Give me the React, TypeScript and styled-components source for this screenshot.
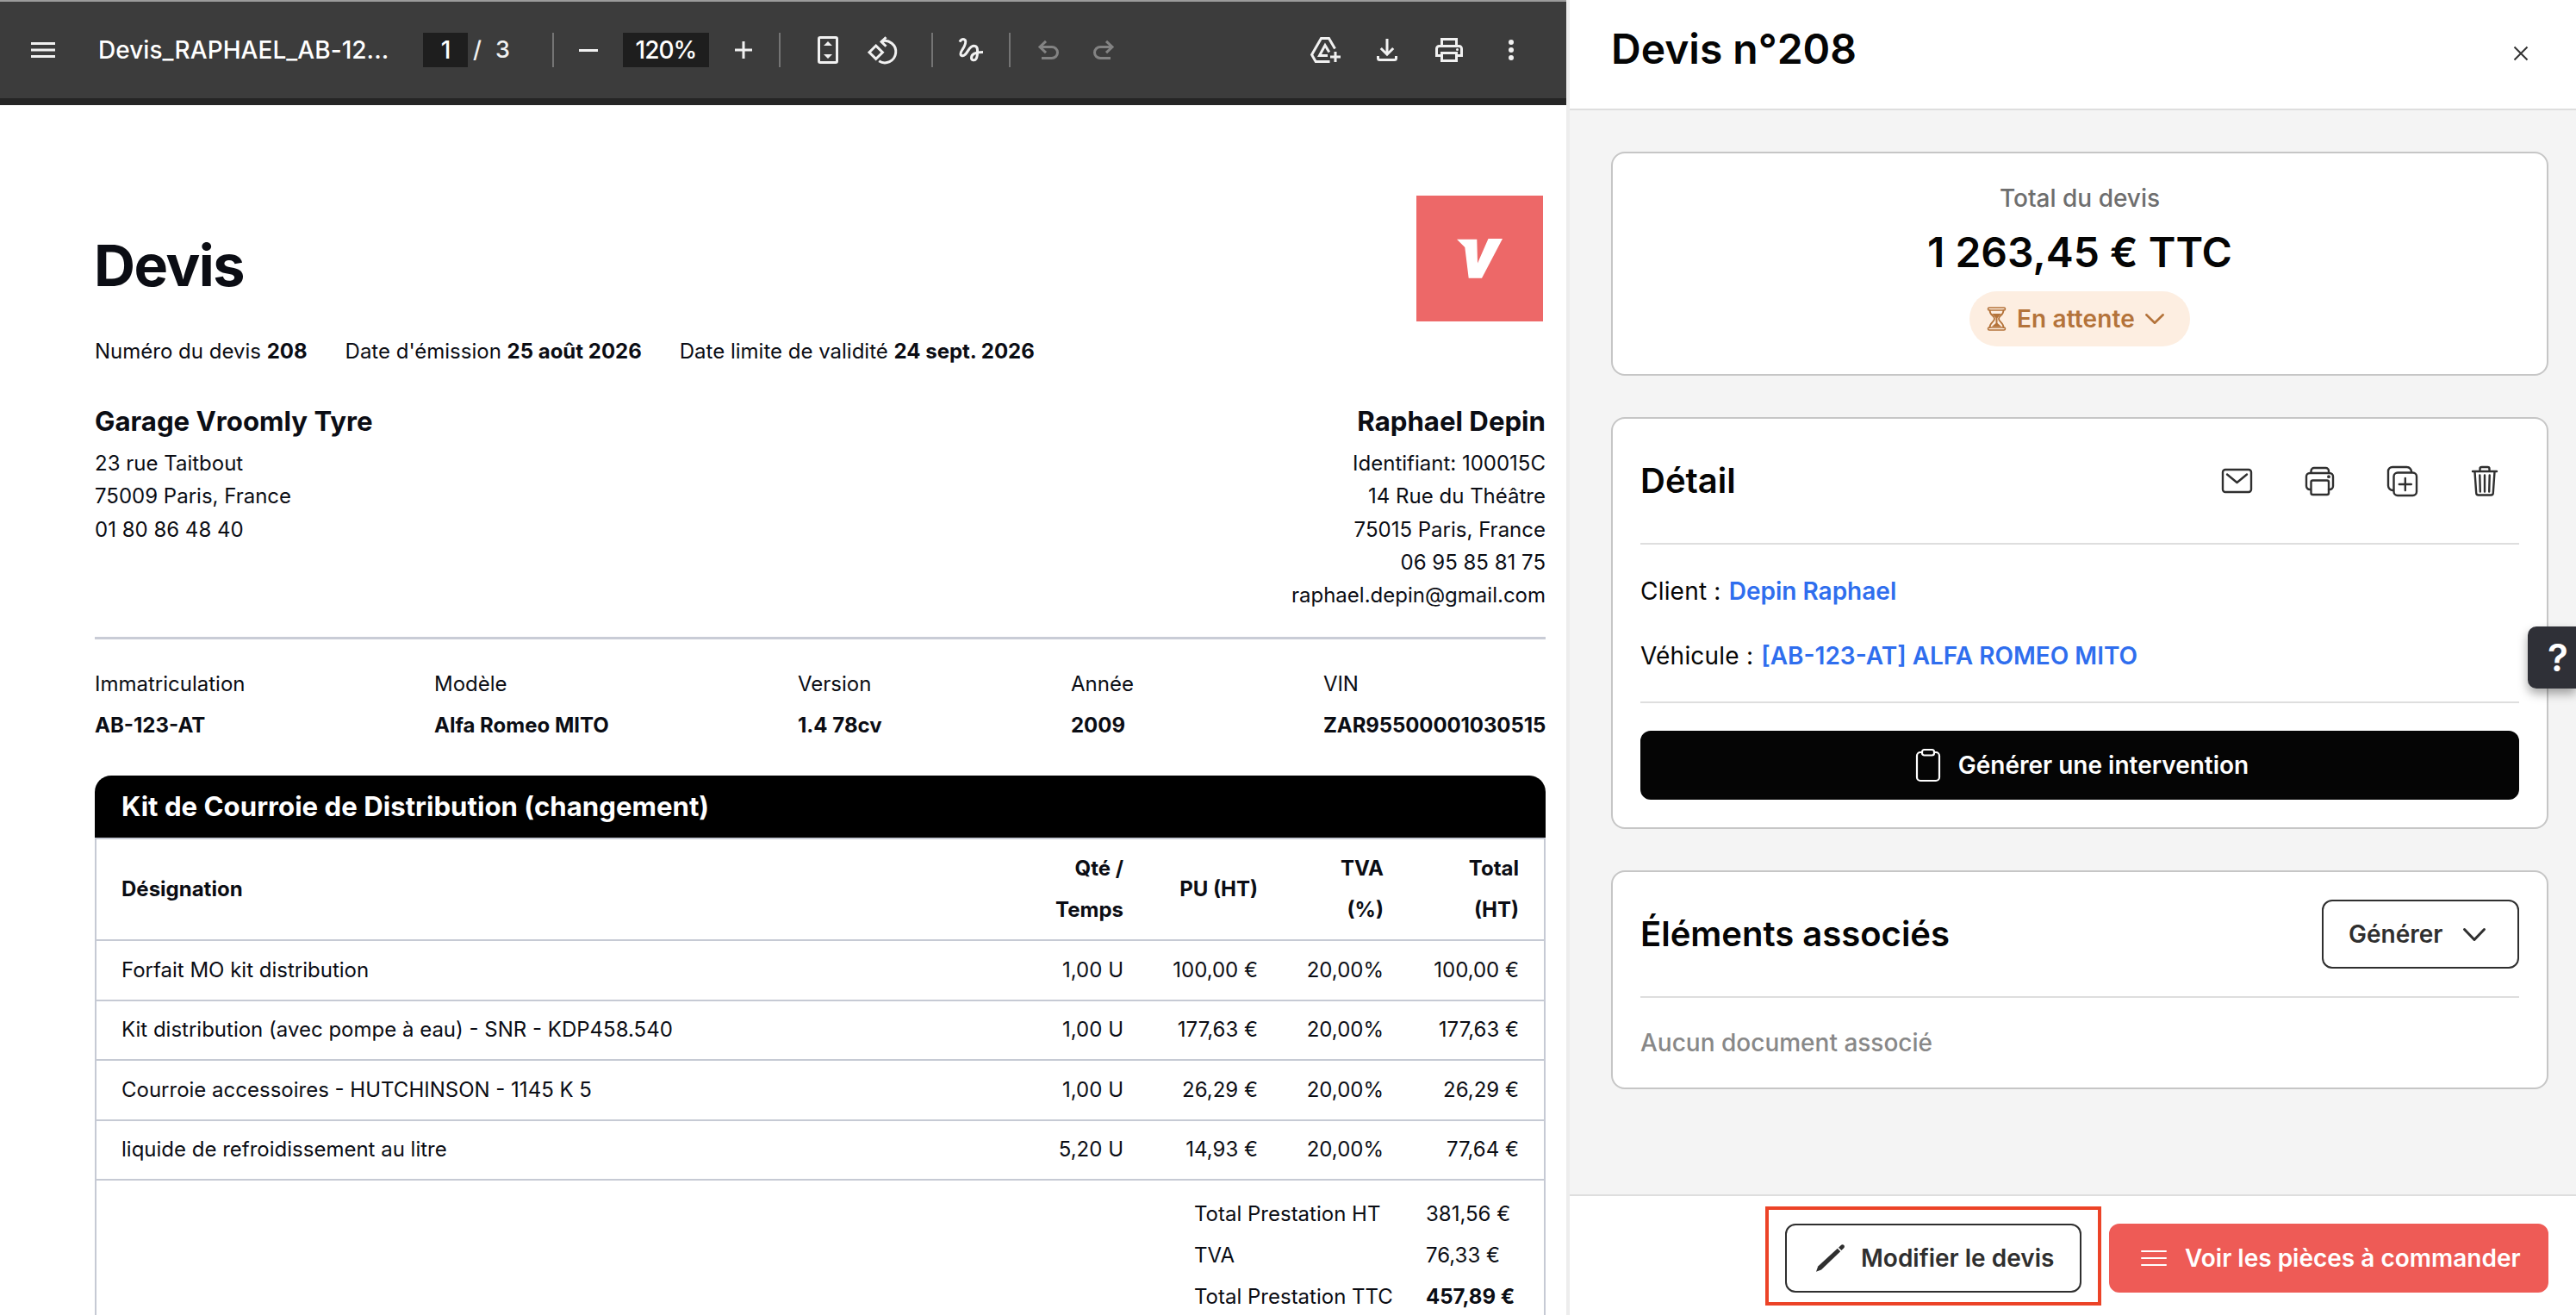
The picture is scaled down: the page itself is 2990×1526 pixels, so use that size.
import React from "react";
import styled, { createGlobalStyle } from "styled-components";

const GlobalStyle = createGlobalStyle`
  * { box-sizing: border-box; }
  body { margin: 0; background: #fff; font-family: Inter, "Liberation Sans", sans-serif; }
  h1, h2, p { margin: 0; }
  svg { display: block; flex: none; overflow: visible; }
`;

const Screen = styled.div`
  position: relative;
  display: flex;
  width: 2990px;
  height: 1526px;
  overflow: hidden;
`;

/* ---------- PDF viewer ---------- */

const Viewer = styled.main`
  width: 1818px;
  height: 1526px;
  overflow: hidden;
  background: #fff;
`;

const Toolbar = styled.header`
  display: flex;
  align-items: center;
  height: 122px;
  padding-left: 36px;
  border-top: 2px solid #9b9b9b;
  border-bottom: 8px solid #252525;
  background: #3c3c3c;
  color: #f1f1f1;
`;

const Slot = styled.div<{ $gap: number; $width: number; $dim?: boolean }>`
  display: flex;
  flex: none;
  justify-content: center;
  width: ${(p) => p.$width}px;
  margin-left: ${(p) => p.$gap}px;
  color: ${(p) => (p.$dim ? "#838383" : "inherit")};
`;

const FileName = styled.div`
  flex: none;
  width: 377px;
  margin-left: 50px;
  color: #fff;
  font-size: 28px;
  font-weight: 500;
  letter-spacing: 0.05px;
  white-space: nowrap;
`;

const Field = styled.div<{ $width: number; $gap: number }>`
  flex: none;
  width: ${(p) => p.$width}px;
  height: 40px;
  margin-left: ${(p) => p.$gap}px;
  background: #1e1e1e;
  color: #fff;
  font-size: 28px;
  font-weight: 500;
  line-height: 40px;
  letter-spacing: -1px;
  text-align: center;
`;

const PageCount = styled.div`
  display: flex;
  flex: none;
  justify-content: space-between;
  width: 43px;
  margin-left: 6px;
  font-size: 27px;
  font-weight: 500;
  line-height: 40px;
`;

const Separator = styled.div<{ $gap: number }>`
  flex: none;
  width: 2px;
  height: 40px;
  margin-left: ${(p) => p.$gap}px;
  background: #747474;
`;

/* ---------- Quote document ---------- */

const Page = styled.article`
  width: 1684px;
  margin-left: 110px;
  padding-top: 105px;
  color: #0b0d14;
  font-size: 24px;
  line-height: 30px;
`;

const PageHead = styled.div`
  display: flex;
  justify-content: space-between;
  height: 146px;
  padding-right: 3px;
`;

const PageTitle = styled.h1`
  margin: 41px 0 0 -1px;
  font-size: 66.5px;
  font-weight: 700;
  line-height: 80px;
  letter-spacing: -1.5px;
`;

const MetaRow = styled.div`
  display: flex;
  gap: 44px;
  margin-top: 20px;
`;

const Parties = styled.div`
  display: flex;
  justify-content: space-between;
  height: 319px;
  padding-top: 46px;
  border-bottom: 3px solid #c9ccd6;
`;

const Party = styled.div<{ $end?: boolean }>`
  text-align: ${(p) => (p.$end ? "right" : "left")};
  line-height: 38.3px;
`;

const PartyName = styled.h2`
  margin-bottom: 10px;
  font-size: 31.2px;
  font-weight: 700;
  line-height: 40px;
`;

const Vehicle = styled.div`
  display: grid;
  grid-template-columns: 394px 422px 317px 293px auto;
  margin-top: 37px;
`;

const VehicleField = styled.div`
  display: grid;
  gap: 18px;
  white-space: nowrap;

  &:last-child {
    letter-spacing: -0.1px;
  }
`;

const TableTitle = styled.div`
  height: 72px;
  margin-top: 43px;
  padding-left: 31px;
  border-radius: 19px 19px 0 0;
  background: #000;
  color: #fff;
  font-size: 31.2px;
  font-weight: 700;
  line-height: 72px;
`;

const Table = styled.div`
  height: 640px;
  border: solid #c6cad4;
  border-width: 2px 2px 0;
`;

const TableRow = styled.div<{ $head?: boolean }>`
  display: grid;
  grid-template-columns: 1fr 156px 156px 146px 157px;
  align-items: center;
  height: ${(p) => (p.$head ? 118 : 69.5)}px;
  padding: 0 29px;
  border-bottom: 2px solid #c6cad4;
  font-weight: ${(p) => (p.$head ? 700 : 400)};
  line-height: 48px;
`;

const Amount = styled.div`
  text-align: right;
`;

const Totals = styled.div`
  display: grid;
  grid-template-columns: 269px auto;
  padding: 15px 0 0 1274px;
  line-height: 48px;
`;

/* ---------- Side panel ---------- */

const Panel = styled.aside`
  display: flex;
  flex-direction: column;
  width: 1172px;
  height: 1526px;
  border-left: 4px solid #ededed;
  background: #f4f4f4;
  color: #050505;
  font-size: 28px;
  line-height: 40px;
`;

const PanelHead = styled.header`
  display: flex;
  justify-content: space-between;
  height: 128px;
  padding: 27px 56px 0 48px;
  border-bottom: 2px solid #dedede;
  background: #fff;
`;

const PanelTitle = styled.h1`
  font-size: 48px;
  font-weight: 600;
  line-height: 60px;
`;

const Close = styled.div`
  margin-top: 27px;
  color: #333;
`;

const PanelBody = styled.div`
  display: flex;
  flex: 1;
  flex-direction: column;
  gap: 48px;
  padding: 48px 32px 0 48px;
`;

const Card = styled.section`
  padding: 0 32px 32px;
  border: 2px solid #c6c6c6;
  border-radius: 16px;
  background: #fff;
`;

const SummaryCard = styled(Card)`
  display: flex;
  flex-direction: column;
  align-items: center;
  height: 260px;
  padding-top: 32px;
`;

const Caption = styled.p`
  color: #6e6e6e;
  font-weight: 500;
`;

const Price = styled.p`
  margin: 13px 0 15px;
  font-size: 48px;
  font-weight: 600;
  line-height: 60px;
`;

const Status = styled.div`
  display: flex;
  align-items: center;
  width: 256px;
  height: 64px;
  padding-left: 21px;
  border-radius: 32px;
  background: #fdeee1;
  color: #b4733a;
  font-weight: 600;
  letter-spacing: 0.12px;
`;

const StatusText = styled.span`
  margin: 0 12px 0 13px;
`;

const CardHead = styled.div`
  display: flex;
  align-items: center;
  justify-content: space-between;
  height: 146px;
  border-bottom: 2px solid #dedede;
`;

const CardTitle = styled.h2`
  font-size: 40px;
  font-weight: 600;
  line-height: 50px;
`;

const Actions = styled.div`
  display: flex;
  gap: 16px;
`;

const Action = styled.div`
  display: flex;
  align-items: center;
  justify-content: center;
  width: 80px;
  height: 80px;
  color: #2f2f2f;
`;

const Details = styled.div`
  display: grid;
  gap: 35px;
  padding: 34px 0 33px;
  border-bottom: 2px solid #dedede;
`;

const Label = styled.span`
  letter-spacing: 0.2px;
`;

const Link = styled.span`
  margin-left: 1px;
  color: #2f6eee;
  font-weight: 600;
`;

const Button = styled.div<{ $kind: "dark" | "outline" | "danger" }>`
  display: flex;
  align-items: center;
  height: 80px;
  border: 2px solid ${(p) => ({ dark: "#050505", outline: "#2f2f2f", danger: "#ee5b56" })[p.$kind]};
  border-radius: 12px;
  background: ${(p) => ({ dark: "#050505", outline: "#fff", danger: "#ee5b56" })[p.$kind]};
  color: ${(p) => (p.$kind === "outline" ? "#2f2f2f" : "#fff")};
  font-weight: 600;
  white-space: nowrap;
`;

const InterventionButton = styled(Button)`
  justify-content: center;
  gap: 21px;
  margin-top: 32px;
  padding-left: 6px;
`;

const GenerateButton = styled(Button)`
  justify-content: space-between;
  width: 229px;
  padding: 0 37px 0 29px;
`;

const EditButton = styled(Button)`
  gap: 19px;
  width: 344px;
  padding-left: 34px;
`;

const OrderButton = styled(Button)`
  gap: 21px;
  width: 510px;
  padding-left: 35px;
`;

const Empty = styled.p`
  padding-top: 32px;
  color: #888;
  font-weight: 500;
`;

const PanelFoot = styled.footer`
  display: flex;
  justify-content: flex-end;
  gap: 32px;
  height: 140px;
  padding: 32px 32px 0 0;
  border-top: 2px solid #dedede;
  background: #fff;
`;

const Spotlight = styled.div`
  position: relative;
  height: 80px;
  &::after {
    content: "";
    position: absolute;
    inset: -20px -23px -15px;
    border: 4px solid #ec4327;
  }
`;

const HelpTab = styled.div`
  position: absolute;
  top: 727px;
  right: 0;
  width: 56px;
  height: 72px;
  padding-left: 23px;
  border-radius: 10px 0 0 10px;
  background: #2f3037;
  box-shadow: 0 6px 12px rgba(0, 0, 0, 0.35);
  color: #fff;
  font-size: 44px;
  font-weight: 600;
  line-height: 72px;
`;

/* ---------- Icons ---------- */

type IconProps = { w: number; h: number; sw?: number; round?: boolean; children: React.ReactNode };

const Icon = ({ w, h, sw = 3, round, children }: IconProps) => (
  <svg
    width={w}
    height={h}
    viewBox={`0 0 ${w} ${h}`}
    fill="none"
    stroke="currentColor"
    strokeWidth={sw}
    strokeLinecap={round ? "round" : "butt"}
    strokeLinejoin={round ? "round" : "miter"}
  >
    {children}
  </svg>
);

const MenuIcon = () => (
  <Icon w={28} h={18}>
    <path d="M0 1.5h28M0 9h28M0 16.5h28" />
  </Icon>
);
const MinusIcon = () => (
  <Icon w={22} h={3}>
    <path d="M0 1.5h22" />
  </Icon>
);
const PlusIcon = () => (
  <Icon w={20} h={20}>
    <path d="M0 10h20M10 0v20" />
  </Icon>
);
const FitIcon = () => (
  <Icon w={24} h={32}>
    <rect x="1.5" y="1.5" width="21" height="29" rx="1.5" />
    <path d="M7 11l5-5 5 5zM7 21h10l-5 5z" fill="currentColor" stroke="none" />
  </Icon>
);
const RotateIcon = () => (
  <Icon w={34} h={33}>
    <path d="M9.7 11l7.7 7.7-7.7 7.7L2 18.7z" />
    <path d="M13.2 28.8A12.7 12.7 0 1 0 16 6.1" />
    <path d="M21.5 1.2l-5.4 5.3 5.4 5.3" />
  </Icon>
);
const ScribbleIcon = () => (
  <Icon w={28} h={28}>
    <path d="M1 4.6C2 2 4.6 1 6.4 1.9c2.2 1 1.6 4-.2 8C4 14.5 2 15.5 2 18.5c0 2.5 3 3 5 1 3.5-3 4-7 7.5-9.3 3.5-2 6.8-.5 7 3.5.2 4 .2 7.5-1.5 10.5-1.5 2.6-5.5 2-5.500-1 0-4 4-6.7 13.500-6.7" />
  </Icon>
);
const UndoIcon = () => (
  <Icon w={24} h={22}>
    <path d="M1.5 7.5h14.300a6.700 6.500 0 0 1 0 13H4M9 .8L2 7.500l7 6.700" />
  </Icon>
);
const RedoIcon = () => (
  <Icon w={24} h={22}>
    <path d="M22.5 7.5H8.200a6.700 6.500 0 0 0 0 13H20M15 .8l7 6.700-7 6.700" />
  </Icon>
);
const DriveIcon = () => (
  <Icon w={35} h={30}>
    <path d="M28.5 13.5L21.5 1.5h-9L1.6 20.5l4.600 8h16.300" />
    <path d="M21.8 17.5L17 9.500l-6.500 12h9.500M29 17v12M23 23h12" />
  </Icon>
);
const DownloadIcon = () => (
  <Icon w={24} h={26}>
    <path d="M12 0v18M4.8 11l7.200 7.200 7.200-7.200M1.500 20v2.500a2 2 0 0 0 2 2h17a2 2 0 0 0 2-2V20" />
  </Icon>
);
const PdfPrintIcon = () => (
  <Icon w={32} h={28}>
    <path d="M7.5 9V1.500h17V9M7 20.500H1.500V12.500a3 3 0 0 1 3-3h23a3 3 0 0 1 3 3v8H25" />
    <rect x="7.5" y="17.5" width="17" height="9" />
    <circle cx="25.5" cy="13.5" r="1.5" fill="currentColor" stroke="none" />
  </Icon>
);
const MoreIcon = () => (
  <Icon w={6} h={24}>
    <g fill="currentColor" stroke="none">
      <circle cx="3" cy="3" r="3" />
      <circle cx="3" cy="12" r="3" />
      <circle cx="3" cy="21" r="3" />
    </g>
  </Icon>
);
const BrandMark = () => (
  <svg width="147" height="146" viewBox="0 0 147 146">
    <path d="M0 0h147v146H0z" fill="#ed6868" />
    <path d="M47 50.7h23.300L71 78.500 83.500 50H100L76 95.700H60.700L56.300 60z" fill="#fff" />
  </svg>
);
const CloseIcon = () => (
  <Icon w={16} h={16} sw={2}>
    <path d="M.5.5l15 15M15.5.5l-15 15" />
  </Icon>
);
const HourglassIcon = () => (
  <Icon w={21} h={28} sw={2} round>
    <path d="M2 1h17a1 1 0 0 1 0 3H2a1 1 0 0 1 0-3zM2 24h17a1 1 0 0 1 0 3H2a1 1 0 0 1 0-3z" strokeWidth="1.6" />
    <path d="M2.5 4c0 6 5.500 6.500 5.500 10s-5.500 4-5.500 10M18.500 4c0 6-5.500 6.500-5.500 10s5.500 4 5.500 10" strokeWidth="1.8" />
    <path d="M5 8h11l-4.500 5v6l4.500 4H5l4.500-4v-6z" fill="currentColor" stroke="none" />
  </Icon>
);
const ChevronIcon = ({ w, h, sw }: { w: number; h: number; sw: number }) => (
  <Icon w={w} h={h} sw={sw} round>
    <path d={`M${sw / 2} ${sw / 2}L${w / 2} ${h - sw / 2}L${w - sw / 2} ${sw / 2}`} />
  </Icon>
);
const MailIcon = () => (
  <Icon w={35} h={28} sw={2.4} round>
    <rect x="1" y="1" width="33" height="26" rx="3" />
    <path d="M6 6.5l11.500 9.500L29 6.500" />
  </Icon>
);
const PrintIcon = () => (
  <Icon w={33} h={33} sw={2.4} round>
    <path d="M6.5 6.5V4.500a3.500 3.500 0 0 1 3.500-3.500h13.500a3.500 3.500 0 0 1 3.500 3.500v2" />
    <path d="M6 26H5a4 4 0 0 1-4-4V11a4 4 0 0 1 4-4h23a4 4 0 0 1 4 4v11a4 4 0 0 1-4 4h-1" />
    <rect x="6.5" y="15.5" width="20.5" height="16.5" rx="2" />
    <circle cx="27" cy="11.2" r="1.9" fill="currentColor" stroke="none" />
  </Icon>
);
const DuplicateIcon = () => (
  <Icon w={35} h={35} sw={2.4} round>
    <rect x="7.5" y="7.5" width="26.5" height="26.5" rx="4.5" />
    <path d="M6.5 28A5.500 5.500 0 0 1 1 22.500V6a5 5 0 0 1 5-5h16.500A5.500 5.500 0 0 1 28 6.500M20.800 14v14M13.800 21h14" />
  </Icon>
);
const TrashIcon = () => (
  <Icon w={30} h={35} sw={2.4} round>
    <path d="M1 6h28M9.5 6V3a2 2 0 0 1 2-2h7a2 2 0 0 1 2 2v3M3.500 6.500l1.700 24.500a2.500 2.500 0 0 0 2.500 2.500h14.600a2.500 2.500 0 0 0 2.500-2.500l1.700-24.500M9.300 10.500l.5 19M15 10.500v19M20.700 10.500l-.5 19" />
  </Icon>
);
const ClipboardIcon = () => (
  <Icon w={28} h={38} sw={2.2} round>
    <path d="M7 4H5a4 4 0 0 0-4 4v25a4 4 0 0 0 4 4h18a4 4 0 0 0 4-4V8a4 4 0 0 0-4-4h-2" />
    <rect x="7" y="1" width="14" height="6.5" rx="2.5" />
  </Icon>
);
const PencilIcon = () => (
  <Icon w={33} h={32}>
    <g fill="currentColor" stroke="none">
      <path d="M0 31.8l2.200-6.300L24.800 4.800l3.400 3.500L6 29.500z" />
      <path d="M26 3.7l2.600-2.500c1.200-1.200 2.800-1.200 3.700-.2s.8 2.500-.3 3.600L29.400 7.100z" />
    </g>
  </Icon>
);
const ListIcon = () => (
  <Icon w={30} h={18} sw={2} round>
    <path d="M1 1h28M1 9h28M1 17h28" />
  </Icon>
);

/* ---------- Data ---------- */

const vehicle = [
  ["Immatriculation", "AB-123-AT"],
  ["Modèle", "Alfa Romeo MITO"],
  ["Version", "1.4 78cv"],
  ["Année", "2009"],
  ["VIN", "ZAR95500001030515"],
];

const lines = [
  ["Forfait MO kit distribution", "1,00 U", "100,00 €", "20,00%", "100,00 €"],
  ["Kit distribution (avec pompe à eau) - SNR - KDP458.540", "1,00 U", "177,63 €", "20,00%", "177,63 €"],
  ["Courroie accessoires - HUTCHINSON - 1145 K 5", "1,00 U", "26,29 €", "20,00%", "26,29 €"],
  ["liquide de refroidissement au litre", "5,20 U", "14,93 €", "20,00%", "77,64 €"],
];

export default function App() {
  return (
    <Screen>
      <GlobalStyle />
      <Viewer>
        <Toolbar>
          <Slot $gap={0} $width={28}><MenuIcon /></Slot>
          <FileName>Devis_RAPHAEL_AB-12...</FileName>
          <Field $width={52} $gap={0}>1</Field>
          <PageCount><span>/</span><span>3</span></PageCount>
          <Separator $gap={49} />
          <Slot $gap={29} $width={22}><MinusIcon /></Slot>
          <Field $width={100} $gap={29}>120%</Field>
          <Slot $gap={30} $width={20}><PlusIcon /></Slot>
          <Separator $gap={31} />
          <Slot $gap={43} $width={24}><FitIcon /></Slot>
          <Slot $gap={34} $width={34}><RotateIcon /></Slot>
          <Separator $gap={40} />
          <Slot $gap={30} $width={28}><ScribbleIcon /></Slot>
          <Separator $gap={30} />
          <Slot $gap={32} $width={24} $dim><UndoIcon /></Slot>
          <Slot $gap={40} $width={24} $dim><RedoIcon /></Slot>
          <Slot $gap={228} $width={35}><DriveIcon /></Slot>
          <Slot $gap={42} $width={24}><DownloadIcon /></Slot>
          <Slot $gap={44} $width={32}><PdfPrintIcon /></Slot>
          <Slot $gap={53} $width={6}><MoreIcon /></Slot>
        </Toolbar>
        <Page>
          <PageHead>
            <PageTitle>Devis</PageTitle>
            <BrandMark />
          </PageHead>
          <MetaRow>
            <span>Numéro du devis <b>208</b></span>
            <span>Date d'émission <b>25 août 2026</b></span>
            <span>Date limite de validité <b>24 sept. 2026</b></span>
          </MetaRow>
          <Parties>
            <Party>
              <PartyName>Garage Vroomly Tyre</PartyName>
              <div>23 rue Taitbout</div>
              <div>75009 Paris, France</div>
              <div>01 80 86 48 40</div>
            </Party>
            <Party $end>
              <PartyName>Raphael Depin</PartyName>
              <div>Identifiant: 100015C</div>
              <div>14 Rue du Théâtre</div>
              <div>75015 Paris, France</div>
              <div>06 95 85 81 75</div>
              <div>raphael.depin@gmail.com</div>
            </Party>
          </Parties>
          <Vehicle>
            {vehicle.map(([label, value]) => (
              <VehicleField key={label}>
                <span>{label}</span>
                <b>{value}</b>
              </VehicleField>
            ))}
          </Vehicle>
          <TableTitle>Kit de Courroie de Distribution (changement)</TableTitle>
          <Table>
            <TableRow $head>
              <div>Désignation</div>
              <Amount>Qté /<br />Temps</Amount>
              <Amount>PU (HT)</Amount>
              <Amount>TVA<br />(%)</Amount>
              <Amount>Total<br />(HT)</Amount>
            </TableRow>
            {lines.map(([name, ...cells]) => (
              <TableRow key={name}>
                <div>{name}</div>
                {cells.map((cell, i) => <Amount key={i}>{cell}</Amount>)}
              </TableRow>
            ))}
            <Totals>
              <span>Total Prestation HT</span><span>381,56 €</span>
              <span>TVA</span><span>76,33 €</span>
              <span>Total Prestation TTC</span><b>457,89 €</b>
            </Totals>
          </Table>
        </Page>
      </Viewer>

      <Panel>
        <PanelHead>
          <PanelTitle>Devis n°208</PanelTitle>
          <Close><CloseIcon /></Close>
        </PanelHead>
        <PanelBody>
          <SummaryCard>
            <Caption>Total du devis</Caption>
            <Price>1 263,45 € TTC</Price>
            <Status>
              <HourglassIcon />
              <StatusText>En attente</StatusText>
              <ChevronIcon w={22} h={12} sw={2.6} />
            </Status>
          </SummaryCard>
          <Card>
            <CardHead>
              <CardTitle>Détail</CardTitle>
              <Actions>
                <Action><MailIcon /></Action>
                <Action><PrintIcon /></Action>
                <Action><DuplicateIcon /></Action>
                <Action><TrashIcon /></Action>
              </Actions>
            </CardHead>
            <Details>
              <div><Label>Client : </Label><Link>Depin Raphael</Link></div>
              <div><Label>Véhicule : </Label><Link>[AB-123-AT] ALFA ROMEO MITO</Link></div>
            </Details>
            <InterventionButton $kind="dark">
              <ClipboardIcon />
              Générer une intervention
            </InterventionButton>
          </Card>
          <Card>
            <CardHead>
              <CardTitle>Éléments associés</CardTitle>
              <GenerateButton $kind="outline">
                Générer
                <ChevronIcon w={26} h={15} sw={3} />
              </GenerateButton>
            </CardHead>
            <Empty>Aucun document associé</Empty>
          </Card>
        </PanelBody>
        <PanelFoot>
          <Spotlight>
            <EditButton $kind="outline">
              <PencilIcon />
              Modifier le devis
            </EditButton>
          </Spotlight>
          <OrderButton $kind="danger">
            <ListIcon />
            Voir les pièces à commander
          </OrderButton>
        </PanelFoot>
      </Panel>
      <HelpTab>?</HelpTab>
    </Screen>
  );
}
